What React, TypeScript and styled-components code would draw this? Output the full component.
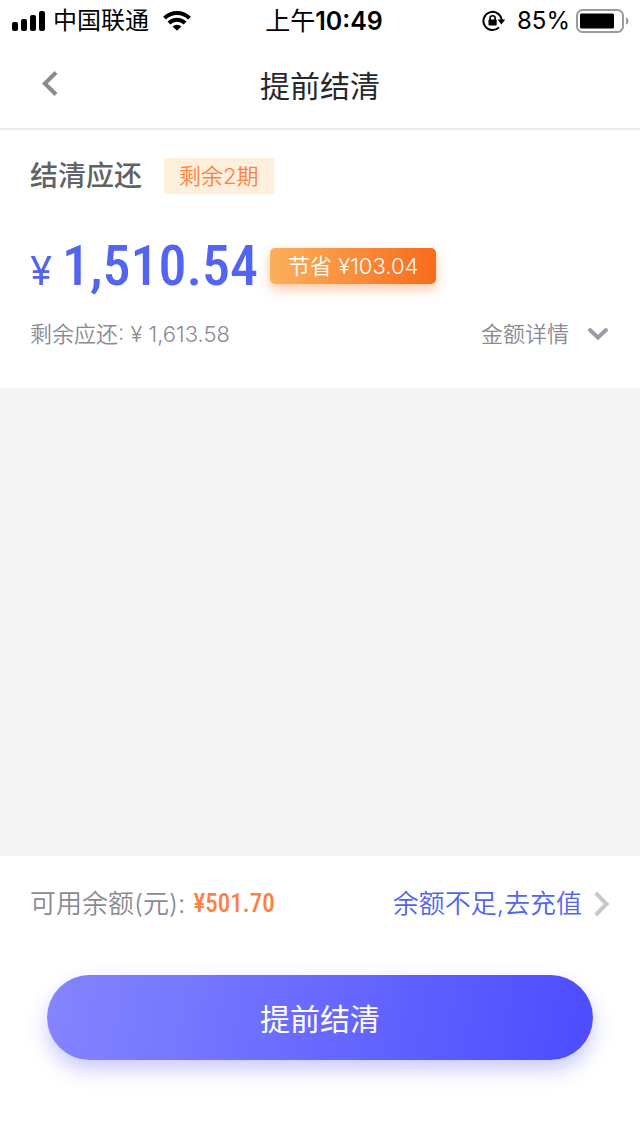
import React from 'react';
import styled, { createGlobalStyle } from 'styled-components';

const GlobalStyle = createGlobalStyle`
  *, *::before, *::after { box-sizing: border-box; }
  body { margin: 0; background: #fff; font-family: Inter, "Noto Sans CJK SC", sans-serif; }
  h1, h2, p { margin: 0; }
  button { font-family: inherit; border: 0; padding: 0; background: none; cursor: pointer; }
  svg { display: block; flex: none; }
`;

const Page = styled.div`
  display: flex;
  flex-direction: column;
  min-height: 100vh;
`;

const StatusBar = styled.div`
  display: grid;
  grid-template-columns: 1fr auto 1fr;
  align-items: center;
  height: 40px;
  padding: 0 10px 0 12px;
  color: #000;
  font-size: 24px;
  line-height: 40px;
`;

const StatusGroup = styled.div<{ $end?: boolean }>`
  display: flex;
  align-items: center;
  justify-content: ${p => (p.$end ? 'flex-end' : 'flex-start')};
  gap: ${p => (p.$end ? 6 : 8)}px;
`;

const StatusText = styled.span`
  padding-top: 1px;
`;

const Carrier = styled(StatusText)`
  margin-right: 6px;
`;

const Clock = styled(StatusText)`
  padding-left: 6px;
  font-size: 25px;
  font-weight: 600;
`;

const ClockPeriod = styled.span`
  font-weight: 400;
`;

const Percent = styled(StatusText)`
  margin-left: 5px;
`;

const NavBar = styled.header`
  display: grid;
  grid-template-columns: 100px 1fr 100px;
  align-items: center;
  height: 90px;
  border-bottom: 2px solid #ececec;
`;

const BackButton = styled.button`
  display: flex;
  align-items: center;
  justify-content: center;
  height: 86px;
`;

const Title = styled.h1`
  padding-top: 4px;
  font-size: 30px;
  font-weight: 400;
  line-height: 40px;
  text-align: center;
  color: #25282d;
`;

const Summary = styled.section`
  padding: 26px 30px 36px;
`;

const SummaryHead = styled.div`
  display: flex;
  align-items: center;
  gap: 22px;
`;

const SummaryTitle = styled.h2`
  font-size: 28px;
  font-weight: 500;
  line-height: 40px;
  color: #606266;
`;

const TermTag = styled.span`
  padding: 0 15px;
  background: #fff0de;
  color: #ff8142;
  font-size: 22px;
  font-weight: 350;
  line-height: 36px;
`;

const AmountRow = styled.div`
  display: flex;
  align-items: center;
  gap: 12px;
  height: 68px;
  margin-top: 36px;
`;

const Amount = styled.p`
  display: flex;
  align-items: baseline;
  gap: 10px;
  padding-top: 4px;
  color: #5264f0;
  line-height: 68px;
`;

const Currency = styled.span`
  font-size: 40px;
`;

const Figure = styled.strong`
  font-family: "Roboto Condensed", "Liberation Sans Narrow", "Liberation Sans", sans-serif;
  font-size: 56px;
  font-weight: 500;
`;

const SavingTag = styled.span`
  padding: 0 18px;
  border-radius: 5px;
  background: linear-gradient(90deg, #fbb05c, #f76b1c);
  box-shadow: 0 5px 12px rgba(250, 130, 50, 0.45);
  color: #fff;
  font-size: 22px;
  font-weight: 350;
  line-height: 36px;
`;

const DetailRow = styled.div`
  display: flex;
  align-items: center;
  justify-content: space-between;
  margin-top: 16px;
  color: #8a8a92;
  font-size: 22px;
  font-weight: 350;
  line-height: 36px;
`;

const DetailButton = styled.button`
  display: flex;
  align-items: center;
  gap: 18px;
  color: inherit;
  font-size: 22px;
  font-weight: 350;
  line-height: 36px;
`;

const Backdrop = styled.main`
  flex: 1;
  background: #f4f4f4;
`;

const Footer = styled.footer`
  padding: 28px 30px 76px;
`;

const BalanceRow = styled.div`
  display: flex;
  align-items: center;
  justify-content: space-between;
  color: #8a8a92;
  font-size: 26px;
  font-weight: 350;
  line-height: 40px;
`;

const Balance = styled.p`
  display: flex;
  gap: 8px;
`;

const BalanceFigure = styled.strong`
  font-family: "Roboto Condensed", "Liberation Sans Narrow", "Liberation Sans", sans-serif;
  font-size: 25px;
  font-weight: 500;
  color: #ff8142;
`;

const TopUpLink = styled.a`
  display: flex;
  align-items: center;
  gap: 12px;
  color: #5264f0;
  text-decoration: none;
`;

const PayButton = styled.button`
  display: block;
  width: calc(100% - 34px);
  height: 85px;
  margin: 51px auto 0;
  padding-top: 2px;
  border-radius: 43px;
  background: linear-gradient(100deg, #8585ff, #4c4cff);
  box-shadow: 0 10px 20px rgba(80, 80, 255, 0.3);
  color: #fff;
  font-size: 30px;
  line-height: 80px;
`;

const SignalIcon = () => (
  <svg width="33" height="20" viewBox="0 0 33 20" aria-hidden="true">
    <rect x="0" y="11" width="6" height="9" rx="2" />
    <rect x="9" y="8" width="6" height="12" rx="2" />
    <rect x="18" y="4" width="6" height="16" rx="2" />
    <rect x="27" y="0" width="6" height="20" rx="2" />
  </svg>
);

const WifiIcon = () => (
  <svg width="28" height="20" viewBox="0 0 28 20" fill="none" stroke="#000" strokeWidth="4" aria-hidden="true">
    <path d="M1.500 7.200a17.800 17.800 0 0 1 25 0" />
    <path d="M5.900 12a11.600 11.600 0 0 1 16.200 0" />
    <path d="M14 19.800l-4.400-4.300a6.400 6.400 0 0 1 8.800 0z" fill="#000" stroke="none" />
  </svg>
);

const LockIcon = () => (
  <svg width="24" height="22" viewBox="0 0 24 22" fill="none" stroke="#000" strokeWidth="2" aria-hidden="true">
    <path d="M19.600 10.200A9.100 9.100 0 1 0 17 17.400" />
    <path d="M15.600 9.600h7.600l-3.800 4.800z" fill="#000" stroke="none" />
    <path d="M8 10V8.300a2.600 2.600 0 0 1 5.200 0V10" strokeWidth="1.600" />
    <rect x="6.500" y="9.500" width="8.200" height="6" rx="0.800" fill="#000" stroke="none" />
  </svg>
);

const BatteryIcon = () => (
  <svg width="54" height="24" viewBox="0 0 54 24" aria-hidden="true">
    <rect x="1" y="1" width="46" height="22" rx="5.500" fill="none" stroke="#9b9b9b" strokeWidth="2" />
    <rect x="4" y="4.500" width="34" height="15" rx="1.500" />
    <path d="M50 8.300c3.300 1 3.300 6.400 0 7.400z" fill="#9b9b9b" />
  </svg>
);

const BackIcon = () => (
  <svg width="16" height="26" viewBox="0 0 16 26" fill="none" stroke="#8a8a92" strokeWidth="4" aria-hidden="true">
    <path d="M14 1.500L2.800 12.500 14 23.500" />
  </svg>
);

const DownIcon = () => (
  <svg width="23" height="14" viewBox="0 0 23 14" fill="none" stroke="#9b9ba3" strokeWidth="4" strokeLinecap="round" aria-hidden="true">
    <path d="M3 3l8 7.500L19 3" />
  </svg>
);

const NextIcon = () => (
  <svg width="16" height="26" viewBox="0 0 16 26" fill="none" stroke="#c8c8cc" strokeWidth="4" aria-hidden="true">
    <path d="M1.700 2L12.500 13 1.700 24" />
  </svg>
);

export default function App() {
  return (
    <Page>
      <GlobalStyle />
      <StatusBar>
        <StatusGroup>
          <SignalIcon />
          <Carrier>中国联通</Carrier>
          <WifiIcon />
        </StatusGroup>
        <Clock><ClockPeriod>上午</ClockPeriod>10:49</Clock>
        <StatusGroup $end>
          <LockIcon />
          <Percent>85%</Percent>
          <BatteryIcon />
        </StatusGroup>
      </StatusBar>
      <NavBar>
        <BackButton aria-label="返回"><BackIcon /></BackButton>
        <Title>提前结清</Title>
      </NavBar>
      <Summary>
        <SummaryHead>
          <SummaryTitle>结清应还</SummaryTitle>
          <TermTag>剩余2期</TermTag>
        </SummaryHead>
        <AmountRow>
          <Amount><Currency>¥</Currency><Figure>1,510.54</Figure></Amount>
          <SavingTag>节省 ¥103.04</SavingTag>
        </AmountRow>
        <DetailRow>
          <span>剩余应还: ¥ 1,613.58</span>
          <DetailButton>金额详情<DownIcon /></DetailButton>
        </DetailRow>
      </Summary>
      <Backdrop />
      <Footer>
        <BalanceRow>
          <Balance>可用余额(元): <BalanceFigure>¥501.70</BalanceFigure></Balance>
          <TopUpLink href="#top-up">余额不足,去充值<NextIcon /></TopUpLink>
        </BalanceRow>
        <PayButton>提前结清</PayButton>
      </Footer>
    </Page>
  );
}
